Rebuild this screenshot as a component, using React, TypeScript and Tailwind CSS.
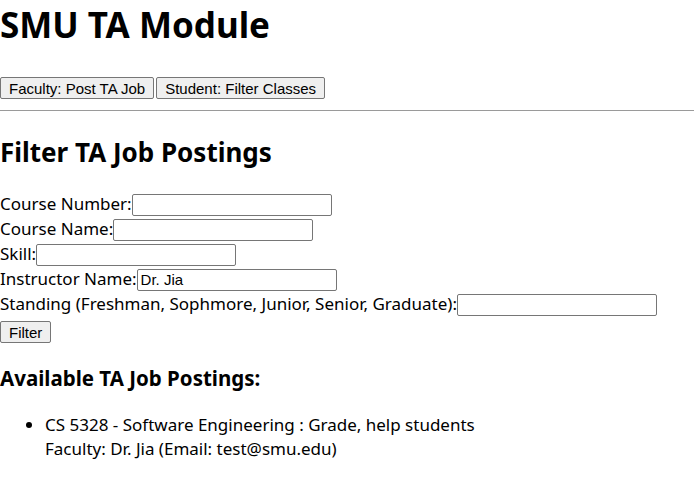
const rows = [
    { label: "Course Number:", value: "" },
    { label: "Course Name:", value: "" },
    { label: "Skill:", value: "" },
    { label: "Instructor Name:", value: "Dr. Jia" },
    { label: "Standing (Freshman, Sophmore, Junior, Senior, Graduate):", value: "" },
];

const btn =
    "bg-[#efefef] border border-[#767676] rounded-[2px] px-[8px] h-[22px] text-[15px] text-black font-['Liberation_Sans',Arial,sans-serif] leading-none";

const App = () => {
    return (
        <div className="min-h-screen w-[694px] bg-white text-black font-['Noto_Sans','Open_Sans',sans-serif] text-[17px]">
            <h1 className="text-[35px] font-bold leading-[44px] pt-[3px] mb-[30px]">SMU TA Module</h1>
            <div className="flex gap-[2px]">
                <button className={btn}>Faculty: Post TA Job</button>
                <button className={btn}>Student: Filter Classes</button>
            </div>
            <hr className="mt-[11px] border-t border-[#9a9a9a]" />

            <h2 className="text-[26px] font-bold leading-[34px] mt-[24px] mb-[24px]">Filter TA Job Postings</h2>
            <div className="flex flex-col">
                {rows.map((row) => (
                    <div key={row.label} className="flex items-start h-[25px]">
                        <span className="leading-[21px] whitespace-nowrap">{row.label}</span>
                        <input
                            defaultValue={row.value}
                            className="mt-[1px] w-[200px] h-[22px] border border-[#767676] rounded-[2px] px-[3px] text-[15px] font-['Liberation_Sans',Arial,sans-serif] outline-none"
                        />
                    </div>
                ))}
                <div className="flex items-start h-[25px] pt-[3px]">
                    <button className={btn}>Filter</button>
                </div>
            </div>

            <h3 className="text-[20.5px] font-bold leading-[28px] mt-[21px] mb-[21px]">Available TA Job Postings:</h3>
            <ul className="list-disc pl-[45px] leading-[24px]">
                <li>
                    CS 5328 - Software Engineering : Grade, help students
                    <br />
                    Faculty: Dr. Jia (Email: test@smu.edu)
                </li>
            </ul>
        </div>
    );
};

export default App;
